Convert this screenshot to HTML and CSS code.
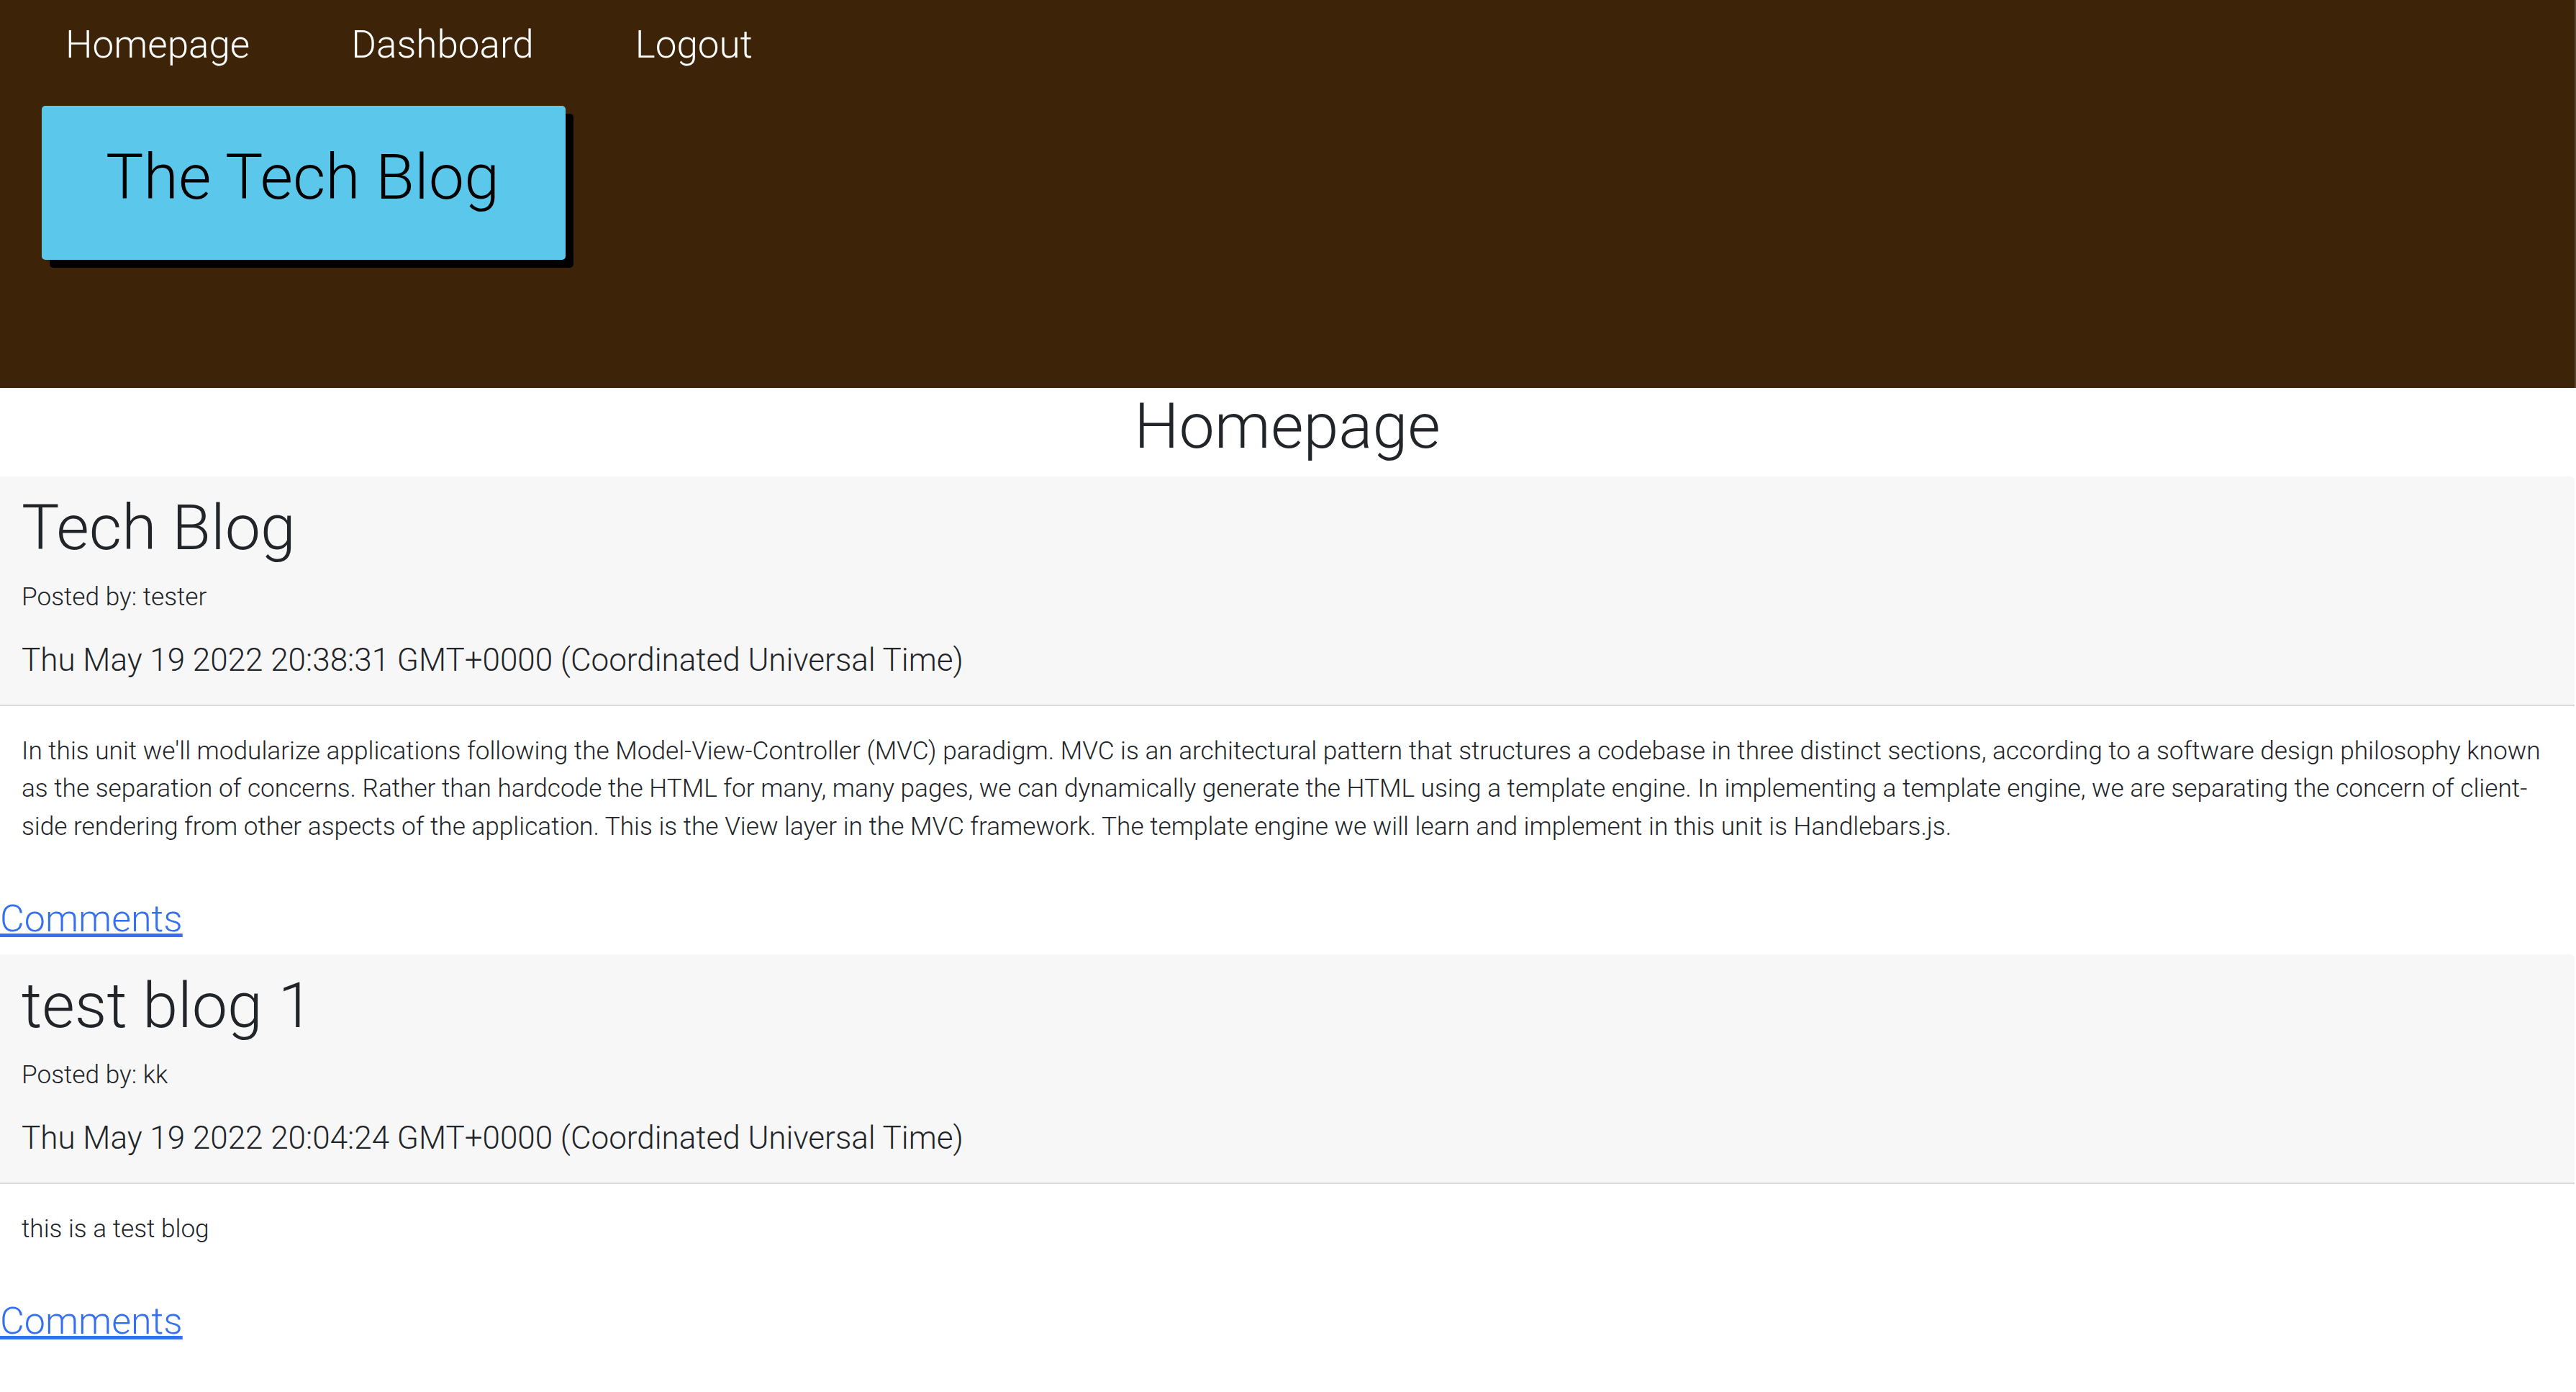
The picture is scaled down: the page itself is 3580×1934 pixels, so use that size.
FILE: index.html
```html
<!DOCTYPE html>
<html lang="en">
<head>
<meta charset="utf-8">
<title>The Tech Blog</title>
<link rel="stylesheet" href="styles.css">
</head>
<body>
<header class="site-header">
  <nav class="nav">
    <a class="nav-link" href="#">Homepage</a>
    <a class="nav-link" href="#">Dashboard</a>
    <a class="nav-link" href="#">Logout</a>
  </nav>
  <div class="brand">
    <h1 class="brand-title">The Tech Blog</h1>
  </div>
</header>
<main class="content">
  <h1 class="page-title">Homepage</h1>

  <article class="post">
    <div class="post-header">
      <h2 class="post-title">Tech Blog</h2>
      <p class="post-author">Posted by: tester</p>
      <h5 class="post-date">Thu May 19 2022 20:38:31 GMT+0000 (Coordinated Universal Time)</h5>
    </div>
    <div class="post-body">
      <p class="post-text">In this unit we'll modularize applications following the Model-View-Controller (MVC) paradigm. MVC is an architectural pattern that structures a codebase in three distinct sections, according to a software design philosophy known as the separation of concerns. Rather than hardcode the HTML for many, many pages, we can dynamically generate the HTML using a template engine. In implementing a template engine, we are separating the concern of client-side rendering from other aspects of the application. This is the View layer in the MVC framework. The template engine we will learn and implement in this unit is Handlebars.js.</p>
    </div>
  </article>
  <h4 class="comments"><a class="comments-link" href="#">Comments</a></h4>

  <article class="post">
    <div class="post-header">
      <h2 class="post-title">test blog 1</h2>
      <p class="post-author">Posted by: kk</p>
      <h5 class="post-date">Thu May 19 2022 20:04:24 GMT+0000 (Coordinated Universal Time)</h5>
    </div>
    <div class="post-body">
      <p class="post-text">this is a test blog</p>
    </div>
  </article>
  <h4 class="comments"><a class="comments-link" href="#">Comments</a></h4>
</main>
</body>
</html>
```

FILE: styles.css
```css
* {
  box-sizing: border-box;
}

html, body {
  margin: 0;
  padding: 0;
  background: #ffffff;
}

body {
  font-family: Roboto, "Liberation Sans", Arial, sans-serif;
  font-weight: 300;
  font-size: 35.2px;
  line-height: 52.8px;
  color: #212529;
}

h1, h2, h4, h5, p {
  margin: 0;
  font-weight: 300;
}

/* ---------- header ---------- */
.site-header {
  background: #3d2409;
  height: 539px;
  border-right: 2px solid #5c4732;
  padding-top: 23px;
}

.nav {
  display: flex;
  gap: 141px;
  padding-left: 91px;
}

.nav-link {
  color: #ffffff;
  text-decoration: none;
  font-size: 53px;
  line-height: 79px;
}

.brand {
  display: inline-block;
  margin-top: 45px;
  margin-left: 58px;
  background: #5bc7eb;
  border-radius: 5px;
  box-shadow: 11px 11px 0 #000000;
  padding: 46px 92px 45px 89px;
}

.brand-title {
  font-size: 88px;
  line-height: 105.6px;
  color: #000000;
  margin-bottom: 17.6px;
  white-space: nowrap;
}

/* ---------- content ---------- */
.content {
  margin-right: 2px;
}

.page-title {
  text-align: center;
  font-size: 88px;
  line-height: 105.6px;
  margin-bottom: 17.6px;
}

.post {
  background: #ffffff;
  border-radius: 0 6px 0 0;
  overflow: hidden;
}

.post-header {
  background: #f7f7f7;
  border-bottom: 2px solid #dadada;
  padding: 17.6px 30px;
}

.post-title {
  font-size: 88px;
  line-height: 106px;
  margin-bottom: 17.6px;
}

.post-author {
  font-size: 35.2px;
  line-height: 52.8px;
  margin-bottom: 35.2px;
}

.post-date {
  font-size: 44px;
  line-height: 52.8px;
  margin-bottom: 17.6px;
}

.post-body {
  padding: 35.2px 30px;
}

.post-text {
  margin-bottom: 35.2px;
}

.comments {
  font-size: 52px;
  line-height: 63.4px;
  margin-bottom: 17.6px;
}

.comments-link {
  color: #3470f0;
  text-decoration: underline;
}
```
